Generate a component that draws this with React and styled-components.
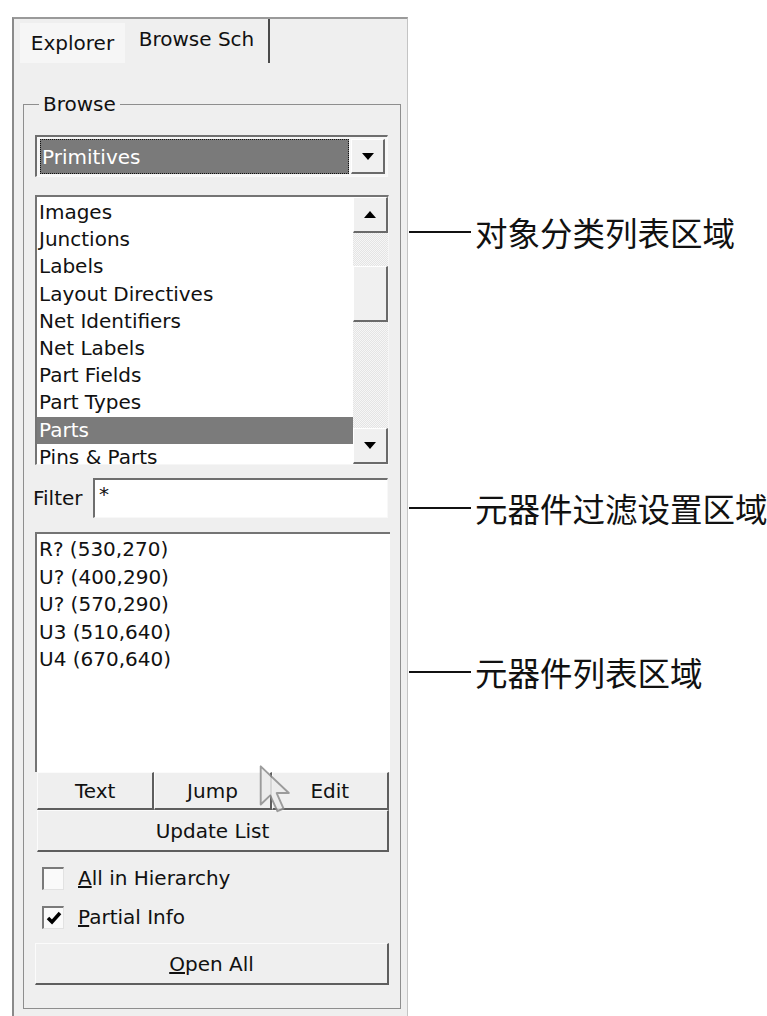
import React from "react";
import styled, { createGlobalStyle } from "styled-components";

const Global = createGlobalStyle`
  html, body { margin: 0; padding: 0; background: #ffffff; overflow: hidden; }
  body { font-family: "DejaVu Sans", "Liberation Sans", sans-serif; color: #111; }
  * { box-sizing: border-box; }
`;

const Page = styled.div`
  display: flex;
  align-items: flex-start;
  padding: 17px 0 0 12px;
  width: 767px;
  height: 1016px;
`;

const Panel = styled.div`
  width: 396px;
  height: 1010px;
  flex: none;
  display: flex;
  flex-direction: column;
  background: #efefef;
  border-left: 2px solid #8a8a8a;
  border-top: 2px solid #9a9a9a;
  border-right: 1px solid #c4c4c4;
  font-size: 20px;
`;

const TabStrip = styled.div`
  height: 44px;
  display: flex;
  align-items: flex-end;
  padding-left: 6px;
`;

const Tab = styled.div`
  display: flex;
  align-items: center;
  justify-content: center;
  width: ${(p) => (p.$active ? "145px" : "105px")};
  height: ${(p) => (p.$active ? "44px" : "40px")};
  padding-bottom: ${(p) => (p.$active ? "4px" : "0")};
  background: ${(p) => (p.$active ? "#efefef" : "#f6f6f6")};
  border-right: ${(p) => (p.$active ? "2px solid #4a4a4a" : "none")};
  white-space: nowrap;
`;

const Body = styled.div`
  padding: 30px 0 0 9px;
`;

const Group = styled.fieldset`
  width: 378px;
  margin: 0;
  min-width: 0;
  border: 1px solid #8e8e8e;
  padding: 20px 11px 23px 11px;
  display: flex;
  flex-direction: column;
`;

const Legend = styled.legend`
  padding: 0 4px;
  margin-left: 4px;
  line-height: 22px;
  font-size: 20px;
`;

const Combo = styled.div`
  height: 42px;
  width: 353px;
  display: flex;
  align-items: stretch;
  padding: 2px 2px 2px 3px;
  gap: 2px;
  background: #f7f7f7;
  border-top: 2px solid #6e6e6e;
  border-left: 2px solid #6e6e6e;
  border-right: 1px solid #fafafa;
  border-bottom: 1px solid #fafafa;
`;

const ComboField = styled.div`
  flex: 1;
  display: flex;
  align-items: center;
  padding-left: 2px;
  background: #7a7a7a;
  color: #fff;
  outline: 1px dotted #111;
  outline-offset: -1px;
`;

const ArrowButton = styled.div`
  width: ${(p) => p.$w || 35}px;
  height: ${(p) => p.$h || 36}px;
  flex: none;
  display: flex;
  align-items: center;
  justify-content: center;
  background: #f0f0f0;
  border-top: 1px solid #ffffff;
  border-left: 1px solid #ffffff;
  border-right: 2px solid #6a6a6a;
  border-bottom: 2px solid #6a6a6a;
`;

const ListBox = styled.div`
  margin-top: 18px;
  height: 270px;
  width: 354px;
  display: flex;
  background: #fff;
  border-top: 2px solid #747474;
  border-left: 2px solid #747474;
  border-right: 1px solid #f6f6f6;
  border-bottom: 1px solid #f6f6f6;
  overflow: hidden;
`;

const Rows = styled.div`
  flex: 1;
  padding-top: 2px;
  overflow: hidden;
`;

const Row = styled.div`
  height: ${(p) => p.$h || 27.2}px;
  line-height: ${(p) => p.$h || 27.2}px;
  padding-left: 2px;
  white-space: nowrap;
  background: ${(p) => (p.$selected ? "#7b7b7b" : "transparent")};
  color: ${(p) => (p.$selected ? "#ffffff" : "#111")};
`;

const ScrollBar = styled.div`
  width: 35px;
  flex: none;
  display: flex;
  flex-direction: column;
  justify-content: space-between;
  background: repeating-conic-gradient(#e4e4e4 0 25%, #f6f6f6 0 50%) 0 0 / 2px 2px;
`;

const Track = styled.div`
  flex: 1;
  padding-top: 33px;
`;

const Thumb = styled.div`
  height: 56px;
  background: #f0f0f0;
  border-top: 1px solid #ffffff;
  border-left: 1px solid #ffffff;
  border-right: 2px solid #6a6a6a;
  border-bottom: 2px solid #6a6a6a;
`;

const FilterRow = styled.div`
  margin-top: 13px;
  height: 40px;
  display: flex;
  align-items: center;
  gap: 10px;
  margin-left: -2px;
`;

const FilterInput = styled.div`
  flex: none;
  width: 295px;
  height: 40px;
  margin-left: auto;
  margin-right: 1px;
  background: #fff;
  padding: 2px 0 0 4px;
  border-top: 2px solid #6e6e6e;
  border-left: 2px solid #6e6e6e;
  border-right: 1px solid #f8f8f8;
  border-bottom: 1px solid #f8f8f8;
`;

const PartsArea = styled.div`
  position: relative;
  margin-top: 14px;
  display: flex;
  flex-direction: column;
`;

const PartsList = styled.div`
  height: 240px;
  width: 355px;
  background: #fff;
  padding-top: 2px;
  border-top: 2px solid #747474;
  border-left: 2px solid #747474;
`;

const ButtonRow = styled.div`
  display: grid;
  grid-template-columns: 1fr 1fr 1fr;
  padding: 0 0 0 2px;
`;

const Button = styled.div`
  height: ${(p) => p.$h || 42}px;
  display: flex;
  align-items: center;
  justify-content: center;
  background: #efefef;
  border-top: 1px solid #fbfbfb;
  border-left: 1px solid #fbfbfb;
  border-right: 2px solid #5e5e5e;
  border-bottom: 2px solid #5e5e5e;
  margin-top: ${(p) => p.$mt || 0}px;
  white-space: nowrap;
`;

const UpdateButton = styled(Button)`
  margin-left: 2px;
`;

const CheckRow = styled.div`
  margin-top: ${(p) => p.$mt}px;
  height: 24px;
  display: flex;
  align-items: center;
  gap: 14px;
  padding-left: 7px;
`;

const Box = styled.div`
  width: 22px;
  height: 23px;
  display: flex;
  align-items: center;
  justify-content: center;
  background: #fafafa;
  border-top: 2px solid #7a7a7a;
  border-left: 2px solid #7a7a7a;
  border-right: 1px solid #e2e2e2;
  border-bottom: 1px solid #e2e2e2;
`;

const Cursor = styled.svg`
  position: absolute;
  left: 223px;
  top: 232px;
  opacity: 0.85;
  pointer-events: none;
`;

const Callouts = styled.div`
  display: flex;
  flex-direction: column;
  margin-left: 1px;
`;

const Callout = styled.div`
  margin-top: ${(p) => p.$mt}px;
  height: 34px;
  display: flex;
  align-items: center;
  gap: 4px;
  white-space: nowrap;
`;

const Leader = styled.div`
  width: 62px;
  height: 2px;
  background: #111;
  flex: none;
`;

const CalloutText = styled.span`
  font-family: "Noto Sans CJK SC", sans-serif;
  font-size: 32.5px;
  line-height: 34px;
  color: #111;
`;

const Tri = ({ up }) => (
  <svg width="12" height="7" viewBox="0 0 12 7">
    {up ? <path d="M6 0 L12 7 L0 7 Z" fill="#000" /> : <path d="M0 0 L12 0 L6 7 Z" fill="#000" />}
  </svg>
);

const categories = [
  "Images",
  "Junctions",
  "Labels",
  "Layout Directives",
  "Net Identifiers",
  "Net Labels",
  "Part Fields",
  "Part Types",
  "Parts",
  "Pins & Parts",
];

const parts = ["R? (530,270)", "U? (400,290)", "U? (570,290)", "U3 (510,640)", "U4 (670,640)"];

export default function App() {
  return (
    <>
      <Global />
      <Page>
        <Panel>
          <TabStrip>
            <Tab>Explorer</Tab>
            <Tab $active>Browse Sch</Tab>
          </TabStrip>
          <Body>
            <Group>
              <Legend>Browse</Legend>
              <Combo>
                <ComboField>Primitives</ComboField>
                <ArrowButton $w={34} $h={35}>
                  <Tri />
                </ArrowButton>
              </Combo>
              <ListBox>
                <Rows>
                  {categories.map((c) => (
                    <Row key={c} $selected={c === "Parts"}>
                      {c}
                    </Row>
                  ))}
                </Rows>
                <ScrollBar>
                  <ArrowButton>
                    <Tri up />
                  </ArrowButton>
                  <Track>
                    <Thumb />
                  </Track>
                  <ArrowButton>
                    <Tri />
                  </ArrowButton>
                </ScrollBar>
              </ListBox>
              <FilterRow>
                <span>Filter</span>
                <FilterInput>*</FilterInput>
              </FilterRow>
              <PartsArea>
                <PartsList>
                  {parts.map((p, i) => (
                    <Row key={i} $h={27.5}>
                      {p}
                    </Row>
                  ))}
                </PartsList>
                <ButtonRow>
                  <Button $h={38}>Text</Button>
                  <Button $h={38}>Jump</Button>
                  <Button $h={38}>Edit</Button>
                </ButtonRow>
                <UpdateButton>Update List</UpdateButton>
                <Cursor width="34" height="50" viewBox="0 0 14 21">
                  <path
                    d="M1 1 L1 17 L5 13.2 L8 19.8 L10.6 18.7 L7.7 12.2 L12.8 12.2 Z"
                    fill="#ececec"
                    stroke="#8d8d8d"
                    strokeWidth="0.8"
                    strokeLinejoin="round"
                  />
                </Cursor>
              </PartsArea>
              <CheckRow $mt={14}>
                <Box />
                <span>
                  <u>A</u>ll in Hierarchy
                </span>
              </CheckRow>
              <CheckRow $mt={15}>
                <Box>
                  <svg width="16" height="14" viewBox="0 0 16 14">
                    <path d="M2 7 L6 11 L14 2" fill="none" stroke="#000" strokeWidth="3.5" />
                  </svg>
                </Box>
                <span>
                  <u>P</u>artial Info
                </span>
              </CheckRow>
              <Button $mt={14}>
                <span>
                  <u>O</u>pen All
                </span>
              </Button>
            </Group>
          </Body>
        </Panel>
        <Callouts>
          <Callout $mt={198}>
            <Leader />
            <CalloutText>对象分类列表区域</CalloutText>
          </Callout>
          <Callout $mt={242}>
            <Leader />
            <CalloutText>元器件过滤设置区域</CalloutText>
          </Callout>
          <Callout $mt={130}>
            <Leader />
            <CalloutText>元器件列表区域</CalloutText>
          </Callout>
        </Callouts>
      </Page>
    </>
  );
}
